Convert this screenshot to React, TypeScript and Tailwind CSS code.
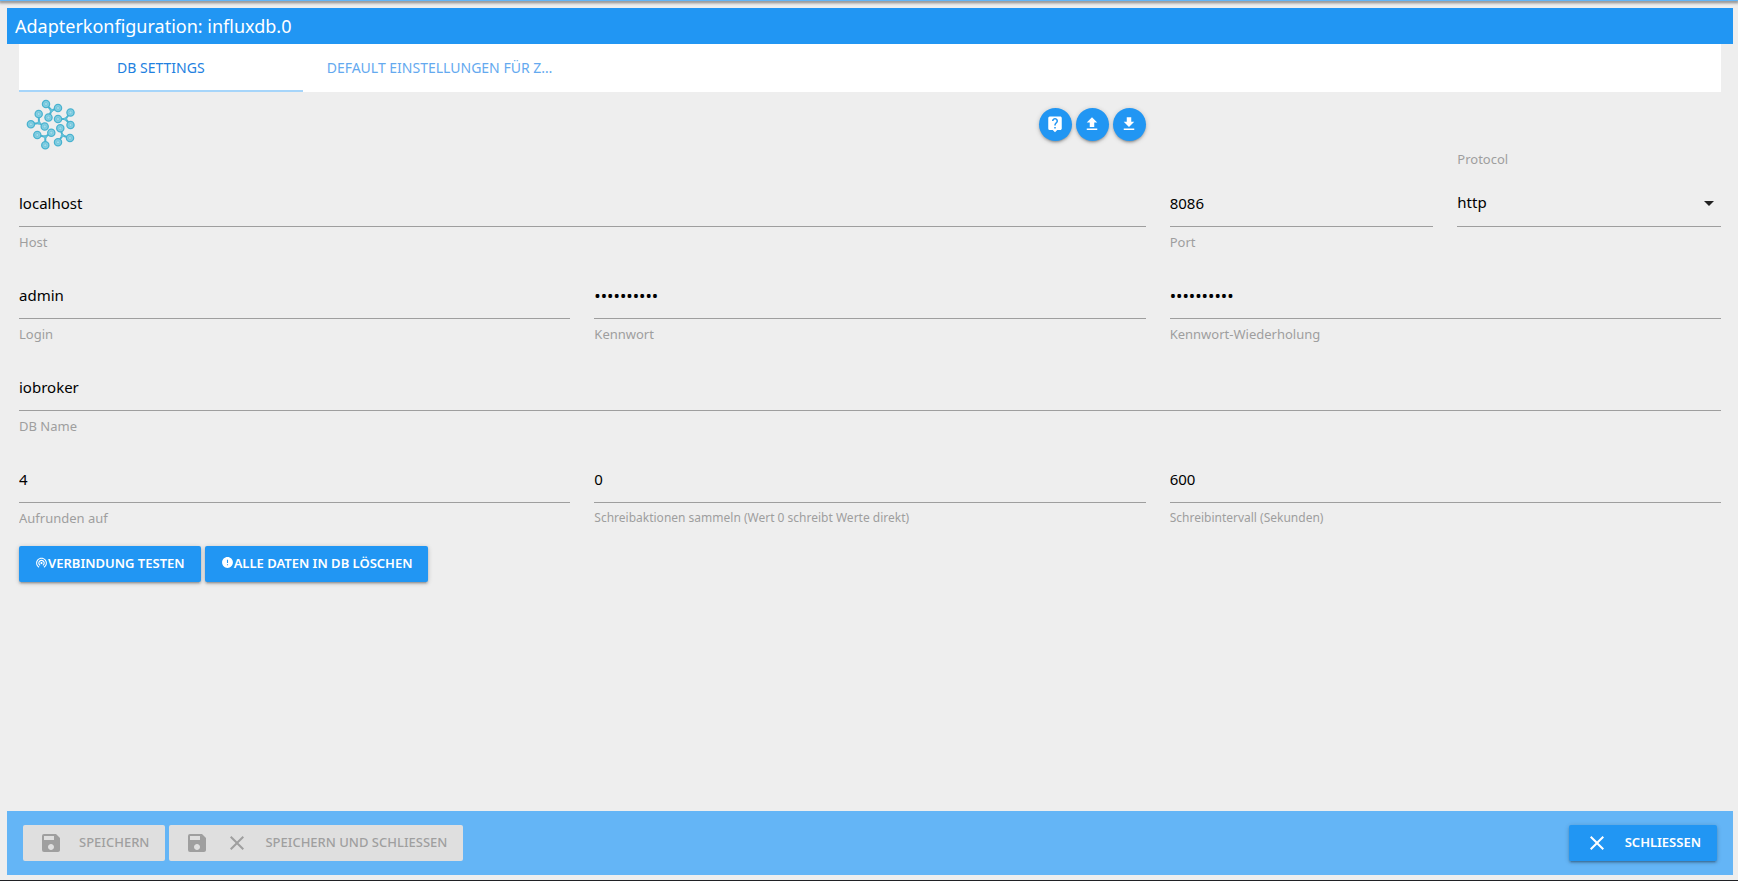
import { useState } from "react";
import type { ReactNode } from "react";
import {
  MdClose,
  MdError,
  MdFileDownload,
  MdFileUpload,
  MdLiveHelp,
  MdSave,
  MdWifiTethering,
} from "react-icons/md";

const raised =
  "shadow-[0_2px_2px_0_rgba(0,0,0,0.14),0_3px_1px_-2px_rgba(0,0,0,0.12),0_1px_5px_0_rgba(0,0,0,0.2)]";

type FieldProps = {
  id: string;
  label: string;
  value: string;
  type?: string;
  span: string;
  small?: boolean;
};

function Field({ id, label, value, type = "text", span, small = false }: FieldProps) {
  return (
    <div className={`flex min-w-0 flex-col ${span}`}>
      <input
        id={id}
        type={type}
        defaultValue={value}
        className={`h-12 w-full border-b border-[#9e9e9e] bg-transparent text-black outline-none ${
          type === "password" ? "pt-0.5 text-[17px]" : "text-[15px]"
        }`}
      />
      <label
        htmlFor={id}
        className={`mt-[5px] h-5 truncate leading-5 text-[#9e9e9e] ${small ? "text-[12px]" : "text-[13px]"}`}
      >
        {label}
      </label>
    </div>
  );
}

function RoundButton({ label, children }: { label: string; children: ReactNode }) {
  return (
    <button
      type="button"
      aria-label={label}
      className={`flex size-[33px] items-center justify-center rounded-full bg-[#2196f3] text-white ${raised}`}
    >
      {children}
    </button>
  );
}

// Three atoms followed by the hub that joins them.
const molecules = [
  [[19, 6], [31, 10], [21.5, 19.5], [24.5, 12.5]],
  [[31, 21], [43.5, 14.5], [43.5, 27], [38.5, 21]],
  [[33.3, 30.3], [43, 40], [31, 44.3], [35.5, 37.5]],
  [[10.3, 37], [24.3, 34.7], [18.3, 47.3], [18.3, 38.8]],
  [[11.7, 16], [3.9, 26.3], [17.7, 28.5], [12, 25]],
];

function InfluxLogo() {
  return (
    <svg viewBox="0 0 48 52" className="h-13 w-12 overflow-visible" aria-hidden="true">
      {molecules.map(([a, b, c, hub]) => (
        <g key={`${a[0]}-${a[1]}`} stroke="#49b2cf" fill="#86cfe2">
          {[a, b, c].map(([x, y]) => (
            <line key={`l${x}-${y}`} x1={x} y1={y} x2={hub[0]} y2={hub[1]} strokeWidth="2" />
          ))}
          <circle cx={hub[0]} cy={hub[1]} r="1.8" stroke="none" fill="#5fc0d8" />
          {[a, b, c].map(([x, y]) => (
            <g key={`c${x}-${y}`}>
              <circle cx={x} cy={y} r="3.6" strokeWidth="1.3" />
              <circle cx={x} cy={y} r="1.5" fill="#a5dcea" stroke="#62bdd6" strokeWidth="0.6" />
            </g>
          ))}
        </g>
      ))}
    </svg>
  );
}

export default function App() {
  const [tab, setTab] = useState(0);
  const tabs = ["DB SETTINGS", "DEFAULT EINSTELLUNGEN FÜR ZUSTÄNDE"];

  return (
    <div className="flex min-h-screen flex-col border-b border-[#202124] bg-[#eeeeee] font-['Noto_Sans','Open_Sans',sans-serif]">
      <div className="h-px shrink-0 bg-[#64b5f6] shadow-[0_1px_3px_1px_rgba(0,0,0,0.45)]" />
      <div className="flex flex-1 flex-col pt-[7px] pr-[5px] pb-[5px] pl-[7px]">
        <header className="flex h-9 items-center bg-[#2196f3] px-2">
          <h1 className="text-[18px] text-white">Adapterkonfiguration: influxdb.0</h1>
        </header>

        <main className="flex flex-1 flex-col px-3">
          <nav role="tablist" className="grid h-12 grid-cols-6 bg-white">
            {tabs.map((name, i) => (
              <button
                key={name}
                type="button"
                role="tab"
                aria-selected={tab === i}
                onClick={() => setTab(i)}
                className={
                  tab === i
                    ? "truncate border-b-2 border-[#a6d5fa] px-6 text-[14px] text-[#2180e0]"
                    : "truncate border-b-2 border-transparent px-6 text-[14px] text-[#64a9ef]"
                }
              >
                {name}
              </button>
            ))}
          </nav>

          <div className="grid grid-cols-3 gap-x-6">
            <div className="col-span-2 flex h-16 items-center justify-between pl-2">
              <InfluxLogo />
              <div className="flex gap-1">
                <RoundButton label="Hilfe">
                  <MdLiveHelp size={18} />
                </RoundButton>
                <RoundButton label="Hochladen">
                  <MdFileUpload size={18} />
                </RoundButton>
                <RoundButton label="Herunterladen">
                  <MdFileDownload size={18} />
                </RoundButton>
              </div>
            </div>
          </div>

          <form className="-mt-[7px] grid grid-cols-12 gap-x-6 gap-y-[19px]" onSubmit={(e) => e.preventDefault()}>
            <div className="col-span-8 flex flex-col pt-[30px]">
              <Field id="host" label="Host" value="localhost" span="w-full" />
            </div>
            <div className="col-span-2 flex flex-col pt-[30px]">
              <Field id="port" label="Port" value="8086" span="w-full" />
            </div>
            <div className="col-span-2 flex flex-col">
              <label htmlFor="protocol" className="h-5 text-[13px] leading-5 text-[#9e9e9e]">
                Protocol
              </label>
              <div className="relative mt-2.5">
                <select
                  id="protocol"
                  defaultValue="http"
                  className="h-12 w-full appearance-none border-b border-[#9e9e9e] bg-transparent text-[15px] text-black outline-none"
                >
                  <option>http</option>
                  <option>https</option>
                </select>
                <svg
                  viewBox="0 0 10 5"
                  className="pointer-events-none absolute top-5.5 right-[7px] h-[5px] w-2.5"
                  aria-hidden="true"
                >
                  <path d="M0 0h10L5 5z" fill="#212121" />
                </svg>
              </div>
            </div>

            <Field id="user" label="Login" value="admin" span="col-span-4" />
            <Field id="password" label="Kennwort" value="0123456789" type="password" span="col-span-4" />
            <Field id="repeat" label="Kennwort-Wiederholung" value="0123456789" type="password" span="col-span-4" />

            <Field id="dbname" label="DB Name" value="iobroker" span="col-span-12" />

            <Field id="round" label="Aufrunden auf" value="4" span="col-span-4" />
            <Field
              id="buffer"
              label="Schreibaktionen sammeln (Wert 0 schreibt Werte direkt)"
              value="0"
              span="col-span-4"
              small
            />
            <Field id="interval" label="Schreibintervall (Sekunden)" value="600" span="col-span-4" small />
          </form>

          <div className="mt-[18px] flex gap-1">
            <button
              type="button"
              className={`flex h-9 items-center rounded-xs bg-[#2196f3] px-4 text-[13px] font-semibold text-white ${raised}`}
            >
              <MdWifiTethering size={13} className="mb-1" />
              VERBINDUNG TESTEN
            </button>
            <button
              type="button"
              className={`flex h-9 items-center rounded-xs bg-[#2196f3] px-4 text-[13px] font-semibold text-white ${raised}`}
            >
              <MdError size={13} className="mb-1" />
              ALLE DATEN IN DB LÖSCHEN
            </button>
          </div>
        </main>

        <footer className="flex h-16 items-center justify-between bg-[#64b5f6] px-4">
          <div className="flex gap-1">
            <button
              type="button"
              disabled
              className="flex h-9 items-center gap-4 rounded-xs bg-[#dfdfdf] px-4 text-[13px] font-medium text-[#9f9f9f]"
            >
              <MdSave size={24} />
              SPEICHERN
            </button>
            <button
              type="button"
              disabled
              className="flex h-9 items-center gap-4 rounded-xs bg-[#dfdfdf] px-4 text-[13px] font-medium text-[#9f9f9f]"
            >
              <MdSave size={24} />
              <MdClose size={24} />
              SPEICHERN UND SCHLIESSEN
            </button>
          </div>
          <button
            type="button"
            className={`flex h-9 items-center gap-4 rounded-xs bg-[#2196f3] px-4 text-[13px] font-semibold text-white ${raised}`}
          >
            <MdClose size={24} />
            SCHLIESSEN
          </button>
        </footer>
      </div>
    </div>
  );
}
